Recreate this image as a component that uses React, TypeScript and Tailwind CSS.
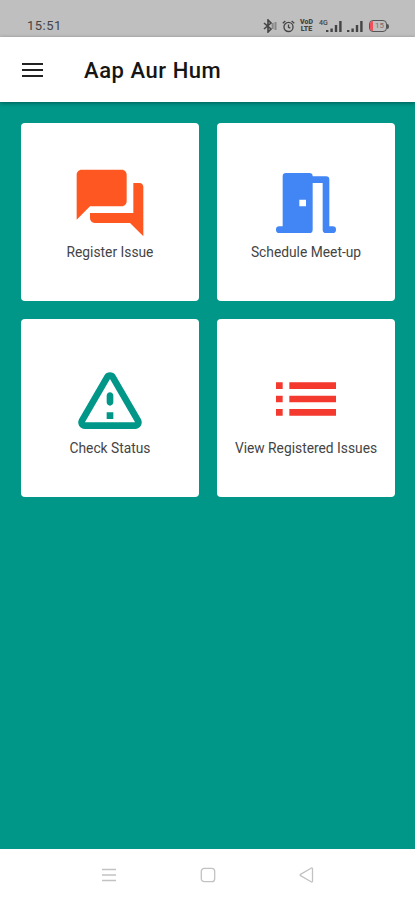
import { ReactNode } from "react";

type Tile = { id: string; label: string; color: string; icon: string };

const TILES: Tile[] = [
  {
    id: "register",
    label: "Register Issue",
    color: "text-[#ff5722]",
    icon: "M20.8 6H19v9H6v1.6c0 .8.6 1.4 1.4 1.4H18l4 4V7.2c0-.7-.5-1.2-1.2-1.2zM17 11.5V3.5c0-.85-.65-1.5-1.5-1.5H3.5C2.65 2 2 2.65 2 3.5V17l4-4h9.5c.85 0 1.5-.65 1.5-1.5z",
  },
  {
    id: "meetup",
    label: "Schedule Meet-up",
    color: "text-[#4285f4]",
    icon: "M20 19h-1V5a1 1 0 0 0-1-1h-4a1 1 0 0 0-1-1H6a1 1 0 0 0-1 1v15H4a1 1 0 0 0 0 2h9a1 1 0 0 0 1-1V6h3v14a1 1 0 0 0 1 1h2a1 1 0 0 0 0-2zm-8-6h-2v-2h2z",
  },
  {
    id: "status",
    label: "Check Status",
    color: "text-[#009688]",
    icon: "M12 5.99L19.53 19H4.47L12 5.99M2.74 18c-.77 1.33.19 3 1.73 3h15.06c1.54 0 2.5-1.67 1.73-3L13.73 4.99c-.77-1.33-2.69-1.33-3.46 0L2.74 18zM11 11v2c0 .55.45 1 1 1s1-.45 1-1v-2c0-.55-.45-1-1-1s-1 .45-1 1zm0 5h2v2h-2z",
  },
  {
    id: "issues",
    label: "View Registered Issues",
    color: "text-[#f4392f]",
    icon: "M3 7h2v2H3zM7 7h14v2H7zM3 11h2v2H3zM7 11h14v2H7zM3 15h2v2H3zM7 15h14v2H7z",
  },
];

function Signal() {
  return (
    <svg viewBox="0 0 16 12" className="h-[12px] w-[16px]" fill="currentColor">
      <path d="M0 10h2.4v2H0zM4.4 8.5h2.4V12H4.4zM8.8 5h2.4v7H8.8zM13.2 1h2.4v11h-2.4z" />
    </svg>
  );
}

function StatusBar() {
  return (
    <div className="flex h-[37px] shrink-0 items-end justify-between bg-[#bfbfbf] pr-[26px] pb-[3px] pl-[27px] text-[#444]">
      <span className="text-[13px] leading-[16px] tracking-[0.5px]">15:51</span>
      <div className="flex h-[16px] items-center">
        {/* Bluetooth */}
        <svg viewBox="0 0 14 14" className="h-[14px] w-[14px]" fill="none" stroke="currentColor" strokeWidth="1.6">
          <path d="M1 4l7 6-3 3V1l3 3-7 6" />
          <path d="M9.7 4v6M12.5 3v8" strokeWidth="2" strokeOpacity="0.45" />
        </svg>
        {/* Alarm */}
        <svg viewBox="0 0 14 14" className="ml-[5px] h-[13px] w-[13px]" fill="none" stroke="currentColor" strokeWidth="1.4">
          <circle cx="7" cy="7.5" r="4.9" />
          <path d="M7 4.8v3l2 1M.8 3.4L3.6 1M13.2 3.4L10.4 1" />
        </svg>
        <div className="ml-[4px] flex w-[15px] flex-col text-center text-[7px] leading-[7px] font-black">
          <span>VoD</span>
          <span>LTE</span>
        </div>
        <div className="relative ml-[12px]">
          <span className="absolute -top-[1px] -left-[7px] text-[7px] leading-[8px] font-medium">4G</span>
          <Signal />
        </div>
        <div className="ml-[5px]">
          <Signal />
        </div>
        {/* Battery */}
        <div className="ml-[6px] flex items-center">
          <div className="flex h-[12px] w-[18px] items-center overflow-hidden rounded-[4px] border-[1.5px] border-[#555]">
            <span className="h-full w-[3px] bg-[#f0505a]" />
            <span className="flex-1 text-center text-[8px] leading-none text-[#8a6a6a]">15</span>
          </div>
          <span className="h-[5px] w-[2px] rounded-r bg-[#555]" />
        </div>
      </div>
    </div>
  );
}

function AppBar() {
  return (
    <header className="z-10 flex h-[65px] shrink-0 items-center bg-white pl-[22px] shadow-[0_1px_4px_rgba(0,0,0,0.4)]">
      <button aria-label="Menu" className="flex w-[21px] flex-col gap-[4px]">
        <span className="h-[2px] bg-[#222]" />
        <span className="h-[2px] bg-[#222]" />
        <span className="h-[2px] bg-[#222]" />
      </button>
      <h1 className="ml-[41px] pt-[2px] text-[22px] leading-none font-medium tracking-[0.55px] text-[#151515]">Aap Aur Hum</h1>
    </header>
  );
}

function TileCard({ tile }: { tile: Tile }) {
  return (
    <button className="flex h-[178px] flex-col items-center justify-center rounded-[4px] bg-white">
      <svg viewBox="0 0 24 24" className={`h-[80px] w-[80px] ${tile.color}`} fill="currentColor" fillRule="evenodd">
        <path d={tile.icon} />
      </svg>
      <span className="text-[13.8px] leading-[18px] whitespace-nowrap text-[#444]">{tile.label}</span>
    </button>
  );
}

function NavButton({ label, children }: { label: string; children: ReactNode }) {
  return (
    <button aria-label={label}>
      <svg viewBox="0 0 16 16" className="h-4 w-4" fill="none" stroke="#c2c2c2" strokeWidth="1.3" strokeLinejoin="round">
        {children}
      </svg>
    </button>
  );
}

export default function App() {
  return (
    <div className="flex h-screen flex-col overflow-hidden bg-[#009688] font-[Roboto,sans-serif]">
      <StatusBar />
      <AppBar />
      <main className="grid flex-1 grid-cols-2 content-start gap-[18px] pt-[21px] pr-[20px] pl-[21px]">
        {TILES.map((tile) => (
          <TileCard key={tile.id} tile={tile} />
        ))}
      </main>
      <nav className="flex h-[51px] shrink-0 items-center justify-center gap-[83px] bg-white">
        <NavButton label="Recent apps">
          <path d="M1 2.5h14M1 8h14M1 13.5h14" />
        </NavButton>
        <NavButton label="Home">
          <rect x="1.3" y="1.3" width="13.4" height="13.4" rx="3" />
        </NavButton>
        <NavButton label="Back">
          <path d="M13.5 1.5v13a.7.7 0 0 1-1 .5L1.5 8.6a.7.7 0 0 1 0-1.2l11-6.4a.7.7 0 0 1 1 .5z" />
        </NavButton>
      </nav>
    </div>
  );
}
